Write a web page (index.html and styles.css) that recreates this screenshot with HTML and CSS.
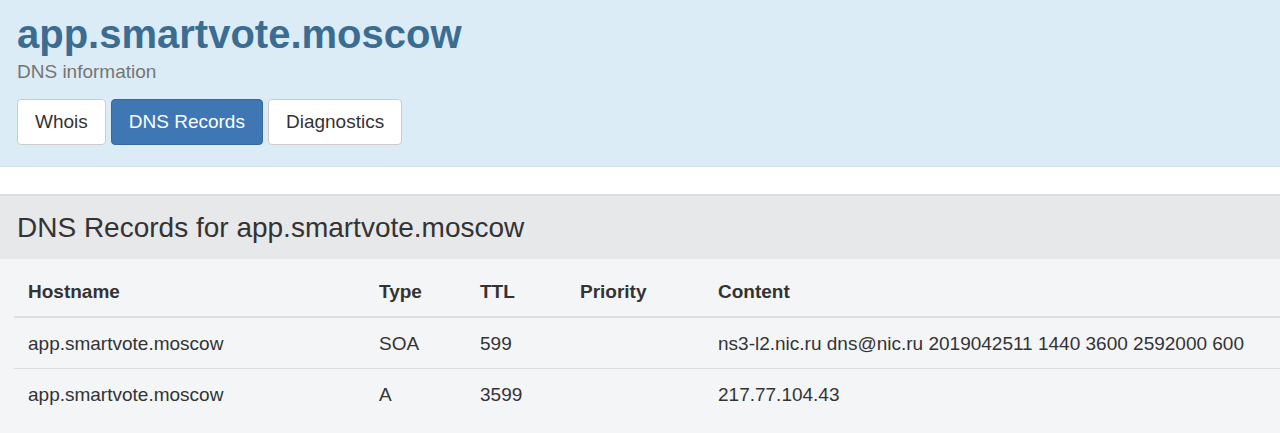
FILE: index.html
```html
<!DOCTYPE html>
<html>
<head>
<meta charset="utf-8">
<link rel="stylesheet" href="styles.css">
</head>
<body>
<header class="hero">
  <h1 class="hero-title">app.smartvote.moscow</h1>
  <p class="hero-sub">DNS information</p>
  <nav class="tabs">
    <a class="tab">Whois</a>
    <a class="tab tab-active">DNS Records</a>
    <a class="tab">Diagnostics</a>
  </nav>
</header>
<div class="spacer"></div>
<section class="panel">
  <h2 class="panel-heading">DNS Records for app.smartvote.moscow</h2>
  <div class="panel-body">
    <table class="records">
      <thead>
        <tr>
          <th class="c-host">Hostname</th>
          <th class="c-type">Type</th>
          <th class="c-ttl">TTL</th>
          <th class="c-prio">Priority</th>
          <th>Content</th>
        </tr>
      </thead>
      <tbody>
        <tr>
          <td>app.smartvote.moscow</td>
          <td>SOA</td>
          <td>599</td>
          <td></td>
          <td>ns3-l2.nic.ru dns@nic.ru 2019042511 1440 3600 2592000 600</td>
        </tr>
        <tr>
          <td>app.smartvote.moscow</td>
          <td>A</td>
          <td>3599</td>
          <td></td>
          <td>217.77.104.43</td>
        </tr>
      </tbody>
    </table>
  </div>
</section>
</body>
</html>
```
FILE: styles.css
```css
html, body {
  margin: 0;
  padding: 0;
}
body {
  font-family: "Liberation Sans", Arial, sans-serif;
  color: #333;
  background: #f4f5f7;
}
.hero {
  background: #dcecf6;
  border-bottom: 1px solid #cfe0ea;
  padding: 12px 17px 20px;
  height: 134px;
}
.hero-title {
  margin: 0;
  font-size: 40px;
  line-height: 44px;
  font-weight: bold;
  color: #3b6c91;
}
.hero-sub {
  margin: 5px 0 0;
  font-size: 19px;
  line-height: 22px;
  color: #757575;
}
.tabs {
  display: flex;
  gap: 5px;
  margin-top: 16px;
}
.tab {
  display: block;
  height: 44px;
  line-height: 44px;
  padding: 0 17px;
  font-size: 19px;
  color: #333;
  background: #fff;
  border: 1px solid #cccccc;
  border-radius: 4px;
}
.tab-active {
  background: #3e77b3;
  border-color: #356aa0;
  color: #fff;
}
.spacer {
  height: 27px;
  background: #fff;
  border-bottom: 2px solid #dddddd;
}
.panel-heading {
  margin: 0;
  height: 63px;
  line-height: 63px;
  padding: 0 17px;
  font-size: 28px;
  font-weight: normal;
  background: #e7e8ea;
  color: #333;
}
.panel-body {
  padding: 7px 0 0 14px;
  height: 167px;
  overflow: hidden;
}
.records {
  border-collapse: collapse;
  width: 1266px;
  font-size: 19px;
  line-height: 27px;
}
.records th, .records td {
  text-align: left;
  padding: 12px 14px 11px;
  vertical-align: top;
}
.records th {
  font-weight: bold;
  border-bottom: 2px solid #dddddd;
}
.records td {
  border-bottom: 1px solid #dddddd;
}
.records tbody tr:last-child td {
  border-bottom: none;
}
.c-host { width: 323px; }
.c-type { width: 73px; }
.c-ttl { width: 72px; }
.c-prio { width: 110px; }
```
